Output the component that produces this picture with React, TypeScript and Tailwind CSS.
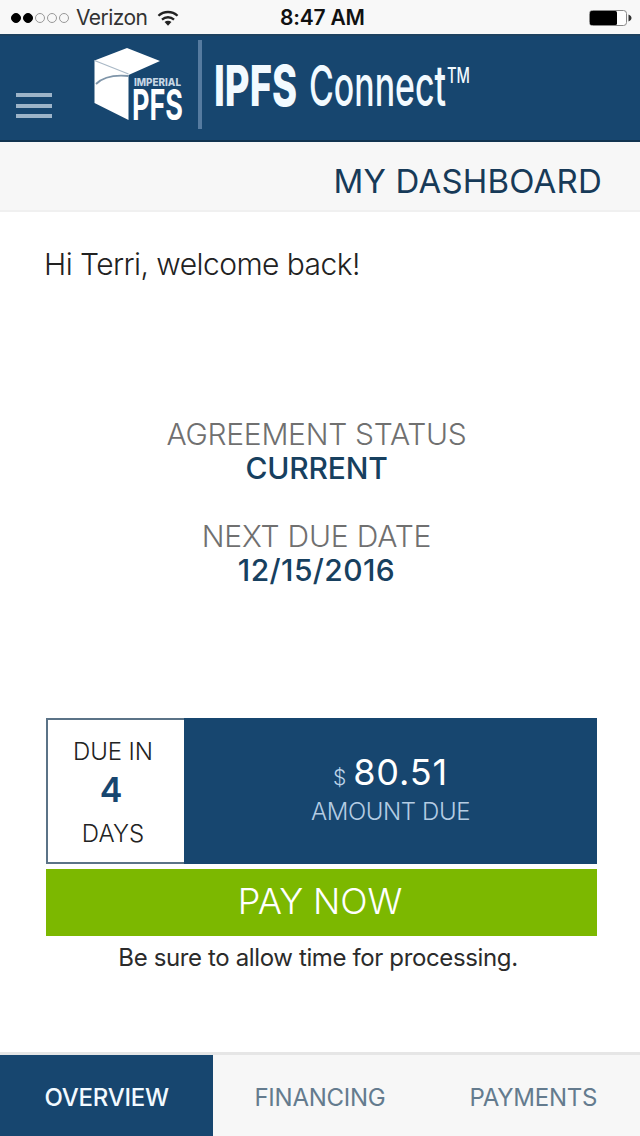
import React, { useState } from "react";

const TABS = [
  { id: "overview", label: "OVERVIEW" },
  { id: "financing", label: "FINANCING" },
  { id: "payments", label: "PAYMENTS" },
];

const WifiIcon = () => (
  <svg className="w-[22px] h-[17px]" viewBox="0 0 23 17" fill="none" stroke="#222" strokeWidth="2.4">
    <path d="M1.5 5.6C7.2 .4 15.8 .4 21.5 5.6" />
    <path d="M5.2 9.6c3.6-3.2 9-3.2 12.6 0" />
    <path d="M7.9 12.2c2.1-1.8 5.1-1.8 7.2 0L11.5 16z" fill="#222" stroke="none" />
  </svg>
);

const StatusBar = () => (
  <div className="relative flex h-[34px] items-center justify-between bg-[#f8f8f8] pt-[2px] pl-[11px] pr-[8px] text-[21px] text-[#333]">
    <div className="flex items-center">
      <div className="flex gap-[2px]">
        {[true, true, false, false, false].map((on, i) => (
          <span
            key={i}
            className={`h-[10px] w-[10px] rounded-full border ${on ? "border-black bg-black" : "border-[#999]"}`}
          />
        ))}
      </div>
      <span className="ml-[7px] mr-[10px] tracking-[-0.55px]">Verizon</span>
      <WifiIcon />
    </div>
    <span className="absolute left-[280px] font-semibold tracking-[-0.2px] text-[#111]">8:47 AM</span>
    <svg className="w-[43px] h-[16px]" viewBox="0 0 43 16">
      <rect x=".5" y=".5" width="37" height="15" rx="3" fill="#fff" stroke="#888" />
      <rect x="1" y="1" width="27" height="14" rx="1.5" fill="#000" />
      <path d="M39.5 4.5c4 1.5 4 5.500 0 7z" fill="#333" />
    </svg>
  </div>
);

const Logo = () => (
  <svg className="w-[92px] h-[78px] overflow-visible" viewBox="0 0 92 78">
    <path d="M1.500 13.500L34 1l33 13-31.500 14V73L1.500 56z" fill="#fff" />
    <path d="M1.500 13.500L35.500 27" stroke="#a9b8c6" strokeWidth="1.200" fill="none" />
    <path d="M3 37C10 30 20 27.500 35.500 29" stroke="#7f95a9" strokeWidth="1.800" fill="none" />
    <text x="41" y="39" fontSize="11" fontWeight="800" fill="#c6d6e4" textLength="47" lengthAdjust="spacingAndGlyphs">
      IMPERIAL
    </text>
    <text x="39" y="73" fontSize="42" fontWeight="700" fill="#fff" textLength="51" lengthAdjust="spacingAndGlyphs">
      PFS
    </text>
  </svg>
);

const Header = () => (
  <header className="flex h-[108px] border-b-2 border-t-2 border-b-[#123450] border-t-[#1d4260] bg-[#17466f]">
    <button className="mt-[57px] ml-[16px] flex h-[25px] w-[36px] flex-col justify-between" title="Menu">
      <span className="h-[4px] w-full bg-[#9db4c9]" />
      <span className="h-[4px] w-full bg-[#9db4c9]" />
      <span className="h-[4px] w-full bg-[#9db4c9]" />
    </button>
    <div className="mt-[11px] ml-[41px]">
      <Logo />
    </div>
    <div className="mt-[4px] ml-[13px] h-[89px] w-[4px] bg-[#567ba0]" />
    {/* Wordmark */}
    <svg className="mt-[20px] ml-[13px] h-[60px] w-[260px] overflow-visible" viewBox="0 0 260 60" fill="#f2faff">
      <text x="-1" y="50" fontSize="56" fontWeight="800" textLength="83" lengthAdjust="spacingAndGlyphs">
        IPFS
      </text>
      <text x="94" y="50" fontSize="56" fontWeight="500" textLength="137" lengthAdjust="spacingAndGlyphs">
        Connect
      </text>
      <text x="232" y="27" fontSize="21" fontWeight="500" textLength="23" lengthAdjust="spacingAndGlyphs">
        TM
      </text>
    </svg>
  </header>
);

const App = () => {
  const [tab, setTab] = useState("overview");

  return (
    <div className="flex h-[1136px] w-[640px] flex-col bg-white font-['Inter',sans-serif]">
      <StatusBar />
      <Header />

      {/* Page title */}
      <div className="flex h-[70px] items-center justify-end border-b-2 border-[#f0f0f0] bg-[#f7f7f7] pt-[10px] pr-[38px]">
        <h1 className="text-[33px] leading-none tracking-[0.2px] text-[#173a58]">MY DASHBOARD</h1>
      </div>

      <p className="mt-[34px] ml-[44px] text-[30px] leading-[36px] font-light tracking-[-0.55px] text-[#222]">
        Hi Terri, welcome back!
      </p>

      {/* Agreement */}
      <div className="mt-[135px] pr-[7px] text-center text-[30px] leading-[34px]">
        <p className="font-light tracking-[-0.3px] text-[#707070]">AGREEMENT STATUS</p>
        <p className="font-medium tracking-[-0.2px] text-[#17405f]">CURRENT</p>
        <p className="mt-[34px] font-light tracking-[-0.2px] text-[#707070]">NEXT DUE DATE</p>
        <p className="font-medium tracking-[0.4px] text-[#17405f]">12/15/2016</p>
      </div>

      {/* Amount due */}
      <div className="mt-[131px] ml-[46px] flex h-[146px] w-[551px]">
        <div className="flex w-[138px] flex-col items-center border-2 border-r-0 border-[#5b7387] pr-[6px] pt-[17px] text-[24px] text-[#222]">
          <span className="leading-[29px] font-light tracking-[-0.1px]">DUE IN</span>
          <span className="mt-[4px] mr-[4px] text-[34px] leading-[40px] font-semibold text-[#17466f]">4</span>
          <span className="mt-[9px] leading-[29px] font-light tracking-[0.1px]">DAYS</span>
        </div>
        <div className="flex flex-1 flex-col items-center bg-[#17466f]">
          <div className="mt-[33px] flex items-baseline leading-[42px]">
            <span className="text-[21px] font-light text-[#bcd3e8]">$</span>
            <span className="ml-[7px] text-[36px] tracking-[0.9px] text-white">80.51</span>
          </div>
          <span className="-mt-[2px] text-[24px] leading-[29px] font-light tracking-[-0.4px] text-[#b4cce3]">
            AMOUNT DUE
          </span>
        </div>
      </div>
      <button className="mt-[5px] ml-[46px] h-[67px] w-[551px] bg-[#7cb800] pr-[3px] pb-[3px] text-[36px] leading-none font-light tracking-[-0.1px] text-white">
        PAY NOW
      </button>
      <p className="mt-[7px] pr-[4px] text-center text-[24px] leading-[29px] tracking-[-0.37px] text-[#2b2b2b]">
        Be sure to allow time for processing.
      </p>

      {/* Bottom tabs */}
      <nav className="mt-auto grid h-[84px] grid-cols-3 border-t-3 border-[#e6e6e6] bg-[#f7f7f7]">
        {TABS.map((t) => (
          <button
            key={t.id}
            onClick={() => setTab(t.id)}
            className={`pt-[4px] text-[24px] tracking-[-0.25px] ${tab === t.id ? "bg-[#17466f] font-medium text-[#f2faff]" : "text-[#647b8e]"
              }`}
          >
            {t.label}
          </button>
        ))}
      </nav>
    </div>
  );
};

export default App;
